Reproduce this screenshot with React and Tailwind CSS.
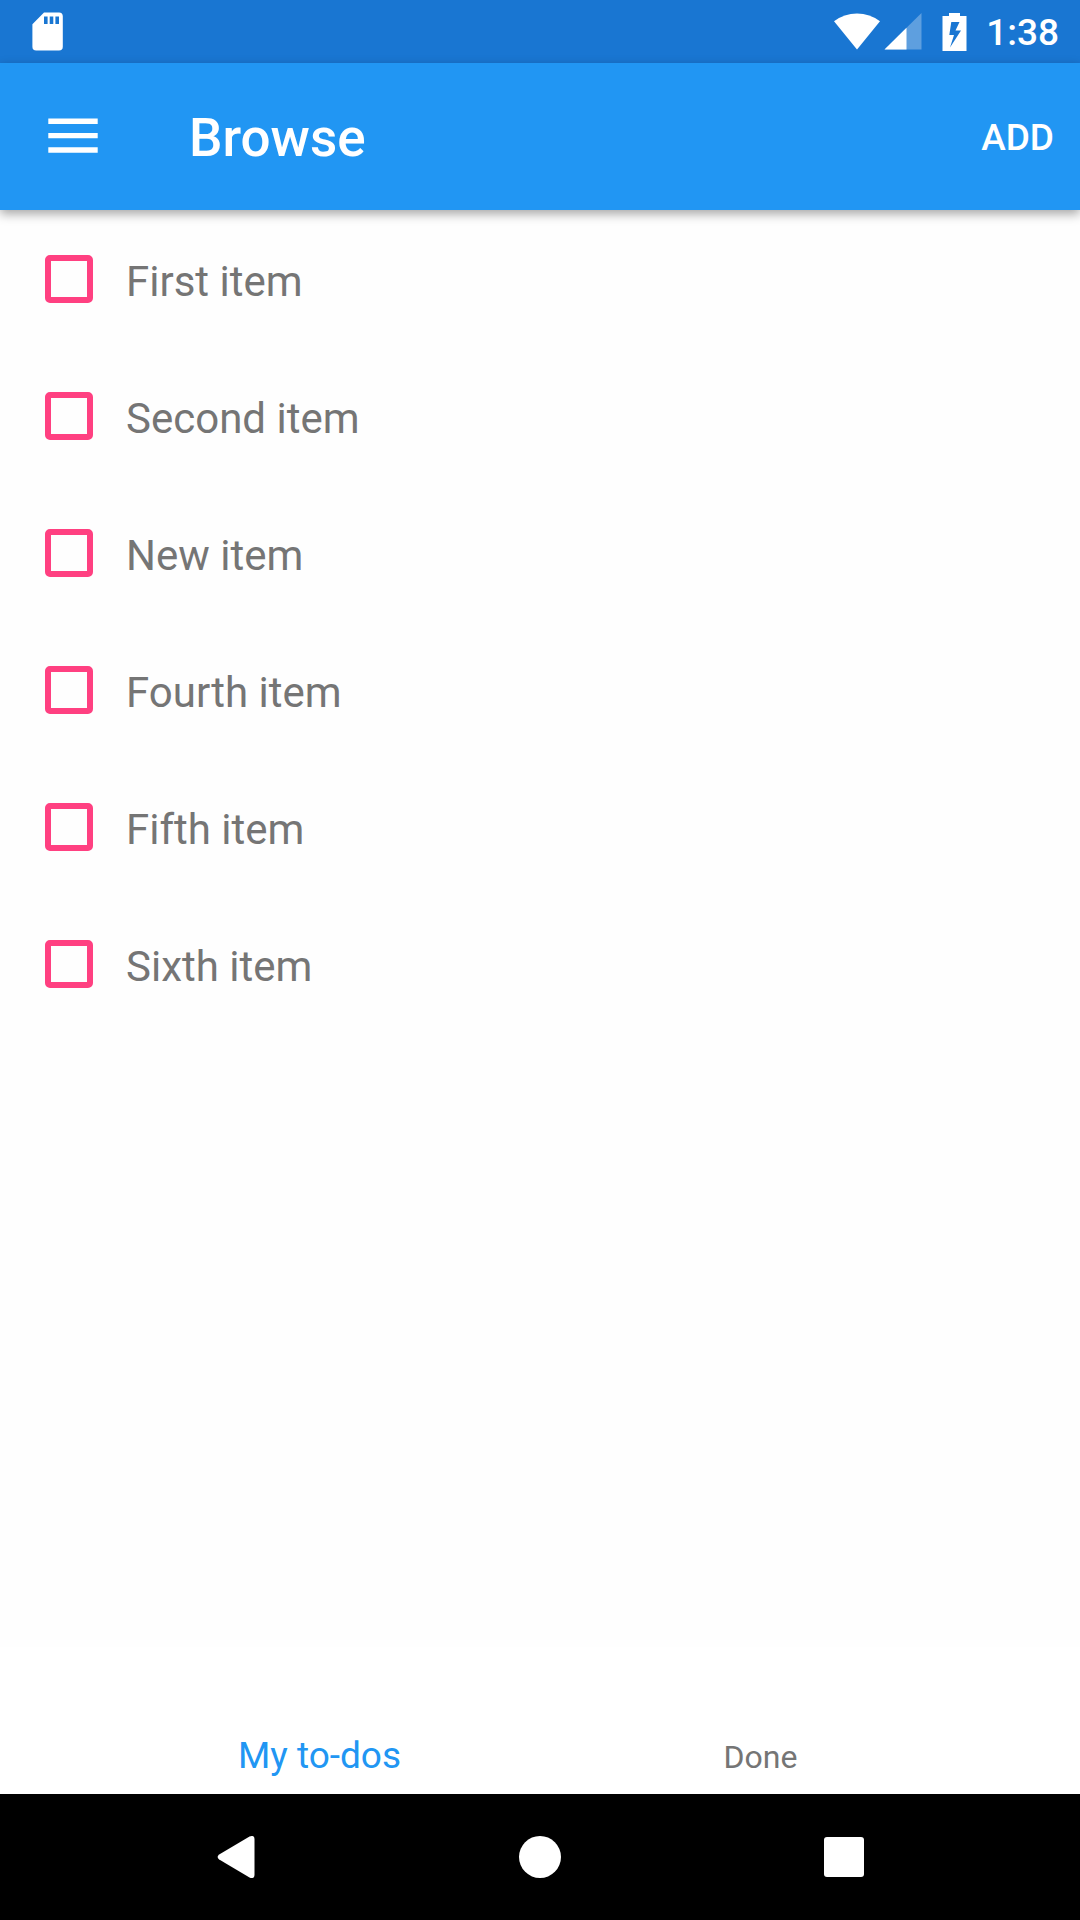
const items = [
  "First item",
  "Second item",
  "New item",
  "Fourth item",
  "Fifth item",
  "Sixth item",
];

function StatusBar() {
  return (
    <div className="flex h-[63px] items-center justify-between bg-[#1976d2] pr-[21px] pl-8 text-white">
      <svg width="31" height="39" viewBox="0 0 31 39" fill="currentColor" aria-label="SD card">
        <path
          fillRule="evenodd"
          d="M12 0.5H27a3.8 3.8 0 0 1 3.8 3.8V34.7a3.8 3.8 0 0 1-3.8 3.8H4.2A3.8 3.8 0 0 1 .4 34.7V12.2ZM12 4.5V12h3.6V4.5ZM17.7 4.5V12h3.6V4.5ZM23.4 4.5V12H27V4.5Z"
        />
      </svg>
      <div className="flex items-center">
        <svg width="46" height="37" viewBox="0 0 46 37" fill="currentColor" aria-label="Wi-Fi">
          <path d="M0 8.2A38 38 0 0 1 46 8.2L23 36.5Z" />
        </svg>
        <svg className="ml-1" width="38" height="37" viewBox="0 0 38 37" fill="currentColor" aria-label="Mobile signal">
          <path d="M37.5 0V36.5H0.5Z" opacity="0.3" />
          <path d="M22.5 14.7V36.5H0.5Z" />
        </svg>
        <svg className="ml-5" width="26" height="38" viewBox="0 0 26 38" fill="currentColor" aria-label="Battery charging">
          <path fillRule="evenodd" d="M7 0H18V3H24.5V38H.5V3H7ZM9.3 9L7.300 22H12L8 34.5L19 17.5H13.500L17.500 9Z" />
        </svg>
        <span className="ml-[18px] pt-0.5 text-[37px] leading-none font-medium">1:38</span>
      </div>
    </div>
  );
}

function AppBar() {
  return (
    <header className="z-10 flex h-[147px] items-center bg-[#2196f3] pr-[26px] pl-12 text-white shadow-[0_4px_10px_rgba(0,0,0,0.35)]">
      <button type="button" aria-label="Open menu">
        <svg width="50" height="37" viewBox="0 0 50 37" fill="currentColor">
          <path d="M.3 .5H49.700V6H.3ZM.3 15H49.700V20.300H.3ZM.3 29.300H49.700V34.800H.3Z" />
        </svg>
      </button>
      <h1 className="ml-[91px] flex-1 pt-1 text-[53px] leading-none font-medium">Browse</h1>
      <button type="button" className="pt-0.5 text-[37px] leading-none font-medium">
        ADD
      </button>
    </header>
  );
}

function TodoItem({ text }) {
  return (
    <li>
      <label className="flex h-[137px] items-center gap-[33px] pl-[45px] text-[42px] text-[#757575]">
        <input
          type="checkbox"
          className="size-12 shrink-0 appearance-none rounded-[5px] border-6 border-[#ff4081] checked:bg-[#ff4081]"
        />
        <span className="pt-1.5">{text}</span>
      </label>
    </li>
  );
}

function BottomTabs() {
  return (
    <nav className="flex h-[147px] items-end justify-center bg-white">
      <button type="button" aria-current="page" className="max-w-[441px] flex-1 pb-4 text-[37px] leading-[44px] text-[#2196f3]">
        My to-dos
      </button>
      <button type="button" className="max-w-[441px] flex-1 pb-4 text-[32px] leading-[42px] text-[#757575]">
        Done
      </button>
    </nav>
  );
}

function SystemBar() {
  return (
    <div className="flex h-[126px] items-center justify-center bg-black text-white">
      <button type="button" aria-label="Back" className="flex w-[304px] justify-center">
        <svg width="38" height="42" viewBox="0 0 38 42" fill="currentColor">
          <path d="M32.500 .6Q37.500 -1.500 37.500 3.500V38.500Q37.500 43.500 32.500 41.400L2.200 23.500Q-1 21 2.200 18.500Z" />
        </svg>
      </button>
      <button type="button" aria-label="Home" className="flex w-[304px] justify-center">
        <svg width="42" height="42" viewBox="0 0 42 42" fill="currentColor">
          <circle cx="21" cy="21" r="21" />
        </svg>
      </button>
      <button type="button" aria-label="Recent apps" className="flex w-[304px] justify-center">
        <svg width="40" height="40" viewBox="0 0 40 40" fill="currentColor">
          <rect width="40" height="40" rx="3" />
        </svg>
      </button>
    </div>
  );
}

export default function App() {
  return (
    <div className="flex min-h-screen flex-col bg-[#fefefe] font-[Roboto,sans-serif]">
      <StatusBar />
      <AppBar />
      <main className="flex-1">
        <ul>
          {items.map((text) => (
            <TodoItem key={text} text={text} />
          ))}
        </ul>
      </main>
      <BottomTabs />
      <SystemBar />
    </div>
  );
}
